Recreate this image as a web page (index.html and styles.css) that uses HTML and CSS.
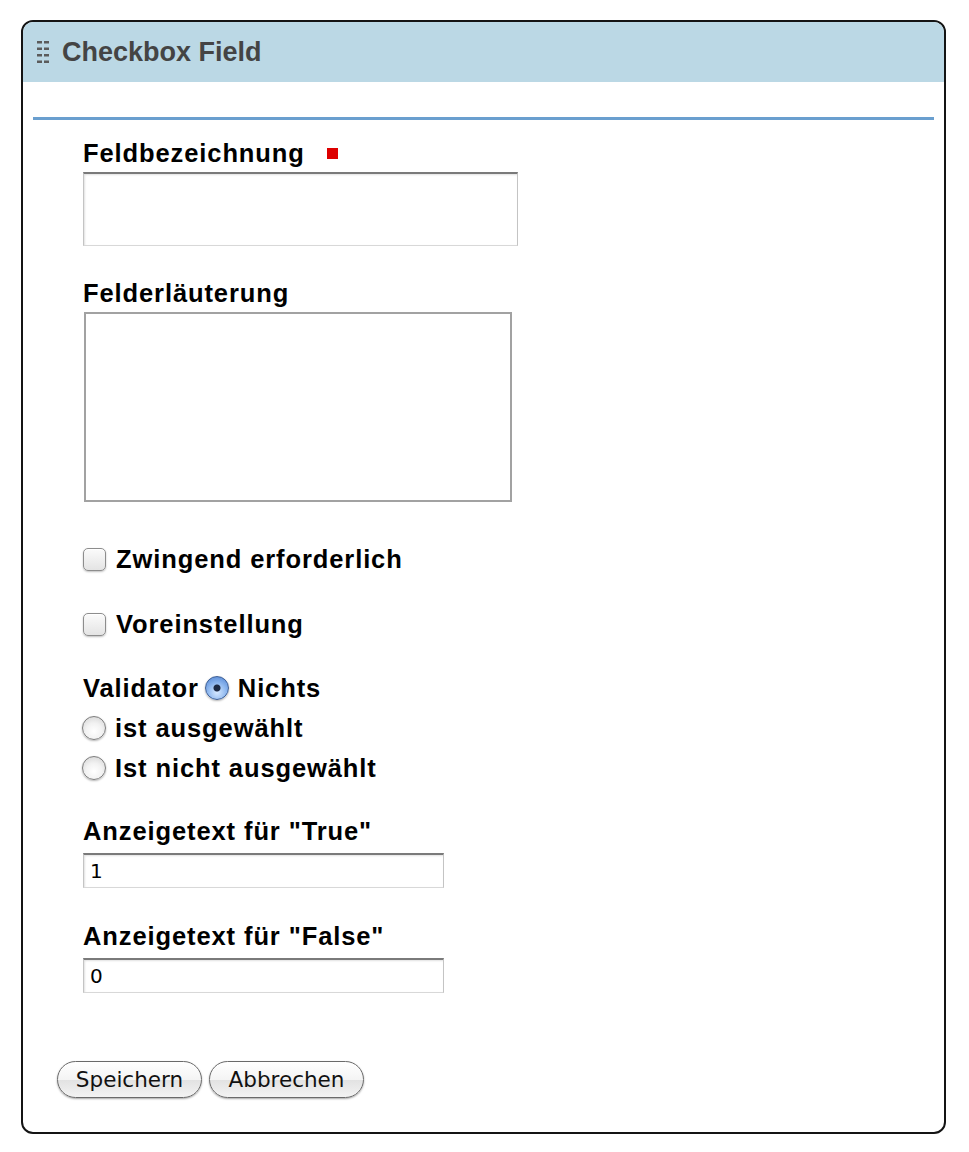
FILE: index.html
```html
<!DOCTYPE html>
<html lang="de">
<head>
<meta charset="utf-8">
<title>Checkbox Field</title>
<link rel="stylesheet" href="styles.css">
</head>
<body>
<div class="panel">
  <div class="panel-header">
    <span class="handle">
      <svg width="13" height="24" viewBox="0 0 13 24">
        <g fill="#5b5b5b">
          <rect x="0" y="0" width="5" height="2.5"/><rect x="7" y="0" width="5" height="2.5"/>
          <rect x="0" y="6.5" width="5" height="2.5"/><rect x="7" y="6.5" width="5" height="2.5"/>
          <rect x="0" y="13" width="5" height="2.5"/><rect x="7" y="13" width="5" height="2.5"/>
          <rect x="0" y="19.5" width="5" height="2.5"/><rect x="7" y="19.5" width="5" height="2.5"/>
        </g>
      </svg>
    </span>
    <h1 class="title">Checkbox Field</h1>
  </div>
  <div class="panel-body">
    <div class="rule"></div>
    <form class="form">
      <label class="label label-first">Feldbezeichnung <span class="req"></span></label>
      <input class="text big" type="text">
      <label class="label label-gap">Felderläuterung</label>
      <textarea class="area"></textarea>
      <label class="check-row row-1"><input type="checkbox" class="cb"> Zwingend erforderlich</label>
      <label class="check-row row-2"><input type="checkbox" class="cb"> Voreinstellung</label>
      <div class="radio-group">
        <div class="check-row">Validator <label class="inline"><input type="radio" name="v" class="rb" checked> Nichts</label></div>
        <label class="check-row radio-row"><input type="radio" name="v" class="rb"> ist ausgewählt</label>
        <label class="check-row radio-row"><input type="radio" name="v" class="rb"> Ist nicht ausgewählt</label>
      </div>
      <label class="label label-true">Anzeigetext für "True"</label>
      <input class="text small" type="text" value="1">
      <label class="label label-false">Anzeigetext für "False"</label>
      <input class="text small" type="text" value="0">
      <div class="buttons">
        <button type="button" class="btn btn-save">Speichern</button>
        <button type="button" class="btn btn-cancel">Abbrechen</button>
      </div>
    </form>
  </div>
</div>
</body>
</html>
```

FILE: styles.css
```css
html, body {
  margin: 0;
  padding: 0;
  background: #ffffff;
}
body {
  font-family: "Liberation Sans", Arial, Helvetica, sans-serif;
  padding: 20px 0 0 21px;
}
.panel {
  width: 921px;
  height: 1110px;
  border: 2px solid #141414;
  border-radius: 12px;
  overflow: hidden;
  box-sizing: content-box;
}
.panel-header {
  height: 60px;
  background: #bbd8e5;
  display: flex;
  align-items: center;
  padding-left: 14px;
}
.handle {
  display: flex;
  width: 13px;
  height: 24px;
  margin-right: 12px;
  margin-top: 2px;
}
.title {
  margin: 0;
  font-size: 27px;
  font-weight: bold;
  color: #444444;
  line-height: 30px;
}
.panel-body {
  padding-top: 35px;
}
.rule {
  height: 3px;
  background: #6a9fcf;
  margin: 0 10px;
}
.form {
  display: flex;
  flex-direction: column;
  align-items: flex-start;
  padding-left: 60px;
}
.label,
.check-row {
  font-size: 25.5px;
  font-weight: bold;
  letter-spacing: 0.9px;
  line-height: 28px;
  color: #000;
  display: flex;
  align-items: center;
}
.label-first { margin-top: 19px; }
.label-gap { margin-top: 33px; }
.req {
  display: inline-block;
  width: 11px;
  height: 11px;
  background: #dd0000;
  margin-left: 22px;
}
.text {
  margin: 5px 0 0;
  box-sizing: border-box;
  border: 1px solid;
  border-color: #7a7a7a #c4c4c4 #d8d8d8 #c4c4c4;
  border-top-width: 2px;
  box-shadow: inset 1px 1px 2px rgba(0,0,0,0.12);
  background: #fff;
  font-family: "DejaVu Sans", "Lucida Grande", sans-serif;
  font-size: 20px;
  padding: 0 6px;
  outline: none;
}
.big {
  width: 435px;
  height: 74px;
}
.small {
  width: 361px;
  height: 35px;
  margin-top: 8px;
}
.area {
  margin: 5px 0 0 1px;
  width: 428px;
  height: 190px;
  box-sizing: border-box;
  border: 2px solid #a2a2a2;
  resize: none;
  outline: none;
}
.row-1 { margin-top: 43px; }
.row-2 { margin-top: 37px; }
.cb {
  appearance: none;
  -webkit-appearance: none;
  width: 23px;
  height: 23px;
  margin: 0 10px 0 0;
  border: 1px solid #8d8d8d;
  border-radius: 5px;
  background: linear-gradient(#fbfbfb, #e4e4e4);
  box-shadow: 0 1px 2px rgba(0,0,0,0.25), inset 0 1px 0 #fff;
}
.radio-group {
  margin-top: 36px;
  display: flex;
  flex-direction: column;
  gap: 12px;
}
.inline {
  display: flex;
  align-items: center;
}
.radio-row { margin-left: -1px; }
.rb {
  appearance: none;
  -webkit-appearance: none;
  width: 24px;
  height: 24px;
  margin: 0 9px 0 0;
  border-radius: 50%;
  border: 1px solid #7d7d7d;
  background: radial-gradient(circle at 50% 65%, #ffffff 0%, #f2f2f2 45%, #cfcfcf 100%);
  box-shadow: 0 1px 2px rgba(0,0,0,0.3);
}
.inline .rb { margin-left: 6px; }
.rb:checked {
  border-color: #3e5f95;
  background:
    radial-gradient(circle, #1d2a44 0 3px, transparent 4px),
    radial-gradient(circle at 50% 70%, #d6e8ff 0%, #8cb6ee 50%, #4c7fd0 100%);
}
.label-true { margin-top: 35px; }
.label-false { margin-top: 34px; }
.buttons {
  display: flex;
  gap: 7px;
  margin-top: 68px;
  margin-left: -26px;
}
.btn {
  height: 37px;
  box-sizing: border-box;
  border: 1.5px solid #6a6a6a;
  border-radius: 19px;
  background: linear-gradient(#ffffff 0%, #f4f4f4 50%, #e2e2e2 51%, #f3f3f3 100%);
  box-shadow: 0 1px 2px rgba(0,0,0,0.35);
  font-family: "DejaVu Sans", "Lucida Grande", sans-serif;
  font-size: 21.5px;
  color: #111;
  padding: 0 16px;
  line-height: 34px;
}
.btn-save { width: 145px; }
.btn-cancel { width: 155px; }
```
